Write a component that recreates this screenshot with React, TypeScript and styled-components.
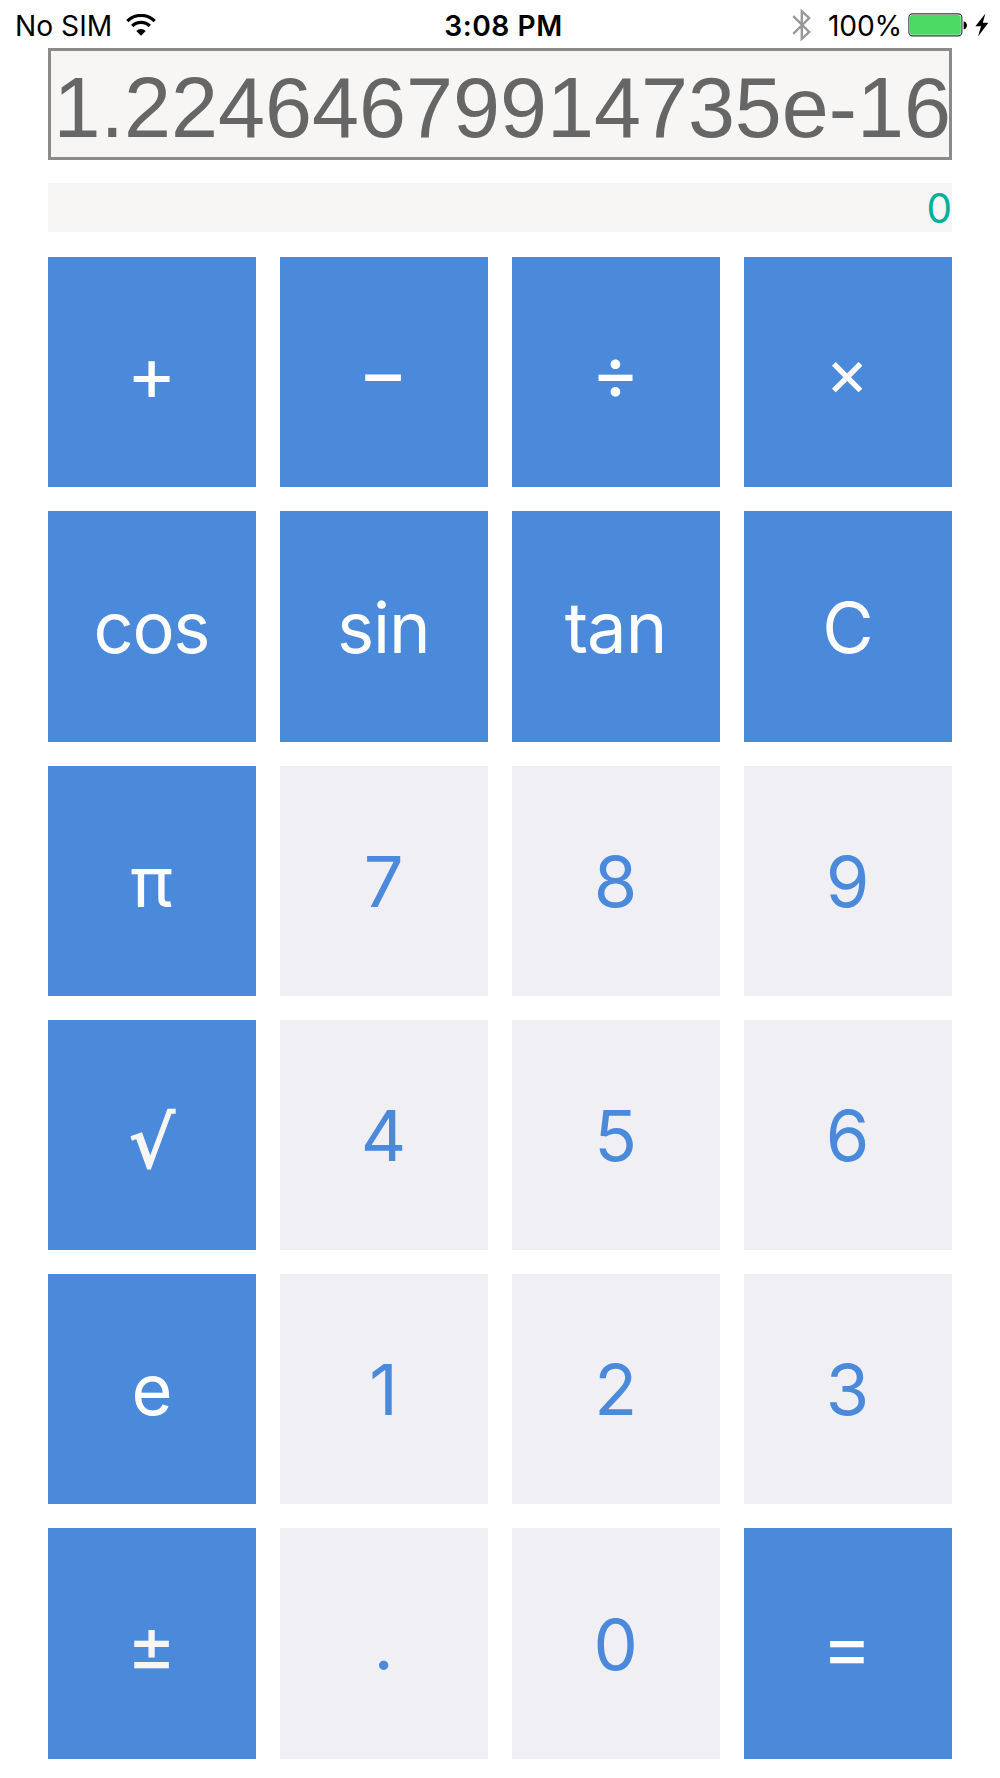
import React from "react";
import styled, { createGlobalStyle } from "styled-components";

const GlobalStyle = createGlobalStyle`
  * { box-sizing: border-box; }
  body { margin: 0; background: #fff; }
`;

const Screen = styled.main`
  width: 1000px;
  height: 1778px;
  display: flex;
  flex-direction: column;
  background: #fff;
  font-family: Inter, "Liberation Sans", sans-serif;
  overflow: hidden;
`;

const StatusBar = styled.header`
  height: 48px;
  display: grid;
  grid-template-columns: 1fr auto 1fr;
  align-items: center;
  padding: 2px 11px 0 15px;
  color: #000;
`;

const StatusGroup = styled.div<{ $end?: boolean }>`
  display: flex;
  align-items: center;
  justify-content: ${(p) => (p.$end ? "flex-end" : "flex-start")};
`;

const StatusText = styled.span<{ $bold?: boolean; $spacing: number }>`
  padding: 1px 0 0 ${(p) => (p.$bold ? 3 : 0)}px;
  font-size: 28.2px;
  line-height: 34px;
  font-weight: ${(p) => (p.$bold ? 600 : 400)};
  letter-spacing: ${(p) => p.$spacing}px;
  white-space: nowrap;
`;

const StatusGap = styled.span`
  width: 16px;
`;

const Icon = styled.svg<{ $left?: number }>`
  display: block;
  flex: none;
  margin-left: ${(p) => p.$left ?? 0}px;
`;

const Body = styled.section`
  padding: 0 48px;
  display: flex;
  flex-direction: column;
`;

const Display = styled.output`
  height: 112px;
  display: flex;
  align-items: center;
  justify-content: flex-end;
  padding-top: 8px;
  border: 3px solid #8a8a8a;
  background: #f7f6f5;
  color: #666;
  font-family: "Liberation Sans", Arial, sans-serif;
  font-size: 84.5px;
  line-height: 96px;
  white-space: nowrap;
`;

const DisplayValue = styled.span`
  margin-right: -2px;
`;

const Memory = styled.output`
  height: 49px;
  margin: 23px 0 25px;
  padding-top: 2px;
  display: flex;
  align-items: center;
  justify-content: flex-end;
  background: #f7f6f5;
  color: #00b198;
  font-size: 40.5px;
  line-height: 49px;
`;

const Keypad = styled.div`
  display: grid;
  grid-template-columns: repeat(4, 208px);
  grid-template-rows: 230px 231px 230px 230px 230px 231px;
  gap: 24px;
`;

const Key = styled.button<{ $light?: boolean }>`
  display: flex;
  align-items: center;
  justify-content: center;
  padding: 0;
  border: 0;
  background: ${(p) => (p.$light ? "#efeff4" : "#4b89db")};
  color: ${(p) => (p.$light ? "#4b89db" : "#fff")};
  font-family: inherit;
  line-height: 86px;
`;

const Glyph = styled.span<{
  $dx?: number;
  $dy?: number;
  $size?: number;
  $spacing?: number;
  $muted?: boolean;
  $radical?: boolean;
}>`
  transform: translate(${(p) => p.$dx ?? -0.4}px, ${(p) => p.$dy ?? 0.5}px);
  font-size: ${(p) => p.$size ?? 70.4}px;
  letter-spacing: ${(p) => p.$spacing ?? 0}px;
  ${(p) => p.$muted && "color: #f7f6f5;"}
  ${(p) => p.$radical && `font-family: "DejaVu Sans", sans-serif; -webkit-text-stroke: 1.8px #f7f6f5;`}
`;

type KeySpec = {
  label: string;
  light?: boolean;
  dx?: number;
  dy?: number;
  size?: number;
  spacing?: number;
  muted?: boolean;
  radical?: boolean;
};

const keys: KeySpec[] = [
  { label: "+", size: 76, dy: 0.6 },
  { label: "−", size: 78, dx: -1, dy: 0.4 },
  { label: "÷", size: 74, dy: 0.4 },
  { label: "×", size: 66, dx: -1, dy: 0.4 },
  { label: "cos", spacing: -1.4, dx: -0.7 },
  { label: "sin", spacing: -1.1, dx: -0.7 },
  { label: "tan", spacing: -1, dx: -0.5 },
  { label: "C", dx: 0 },
  { label: "π" },
  { label: "7", light: true },
  { label: "8", light: true },
  { label: "9", light: true },
  { label: "√", size: 71, dx: 0, dy: 8, muted: true, radical: true },
  { label: "4", light: true },
  { label: "5", light: true },
  { label: "6", light: true },
  { label: "e", dx: 0 },
  { label: "1", light: true },
  { label: "2", light: true },
  { label: "3", light: true },
  { label: "±", size: 75, dy: 0, muted: true },
  { label: ".", light: true },
  { label: "0", light: true },
  { label: "=", size: 76, dx: -1, dy: 2.2 },
];

const WifiIcon = () => (
  <Icon $left={14} width="30" height="22" viewBox="0 0 30 22" fill="none">
    <path d="M1.3 7.1 A19.3 19.3 0 0 1 28.7 7.1" stroke="#000" strokeWidth="3.2" />
    <path d="M6.2 12 A12.4 12.4 0 0 1 23.8 12" stroke="#000" strokeWidth="3.2" />
    <path d="M10.3 17 A6.8 6.8 0 0 1 19.7 17 L15 21.7 Z" fill="#000" />
  </Icon>
);

const BluetoothIcon = () => (
  <Icon width="20" height="34" viewBox="0 0 20 34" fill="none" stroke="#999" strokeWidth="2.4">
    <path d="M1.2 8.2 L17.2 24 L9.8 30.8 V3.2 L17.2 10 L1.2 25.8" />
  </Icon>
);

const BatteryIcon = () => (
  <Icon $left={6} width="60" height="24" viewBox="0 0 60 24">
    <rect x="0.9" y="0.9" width="53" height="22" rx="3.6" fill="#fff" stroke="#333" strokeWidth="1.1" />
    <rect x="2" y="2" width="50.8" height="19.8" rx="2.6" fill="#4cd964" />
    <path d="M55.6 8.2 C60 9 60 15.6 55.6 16.4 Z" fill="#000" />
  </Icon>
);

const BoltIcon = () => (
  <Icon $left={7} width="14" height="24" viewBox="0 0 14 24">
    <path d="M10.4 0.5 L0.4 13.2 H6 L3 23.4 L13.4 9.8 H7.8 Z" fill="#000" />
  </Icon>
);

export default function App() {
  return (
    <Screen>
      <GlobalStyle />
      <StatusBar>
        <StatusGroup>
          <StatusText $spacing={0}>No SIM</StatusText>
          <WifiIcon />
        </StatusGroup>
        <StatusText $bold $spacing={0.5}>3:08 PM</StatusText>
        <StatusGroup $end>
          <BluetoothIcon />
          <StatusGap />
          <StatusText $spacing={-0.2}>100%</StatusText>
          <BatteryIcon />
          <BoltIcon />
        </StatusGroup>
      </StatusBar>
      <Body>
        <Display>
          <DisplayValue>1.22464679914735e-16</DisplayValue>
        </Display>
        <Memory>0</Memory>
        <Keypad>
          {keys.map((k) => (
            <Key key={k.label} $light={k.light}>
              <Glyph
                $dx={k.dx}
                $dy={k.dy}
                $size={k.size}
                $spacing={k.spacing}
                $muted={k.muted}
                $radical={k.radical}
              >
                {k.label}
              </Glyph>
            </Key>
          ))}
        </Keypad>
      </Body>
    </Screen>
  );
}
